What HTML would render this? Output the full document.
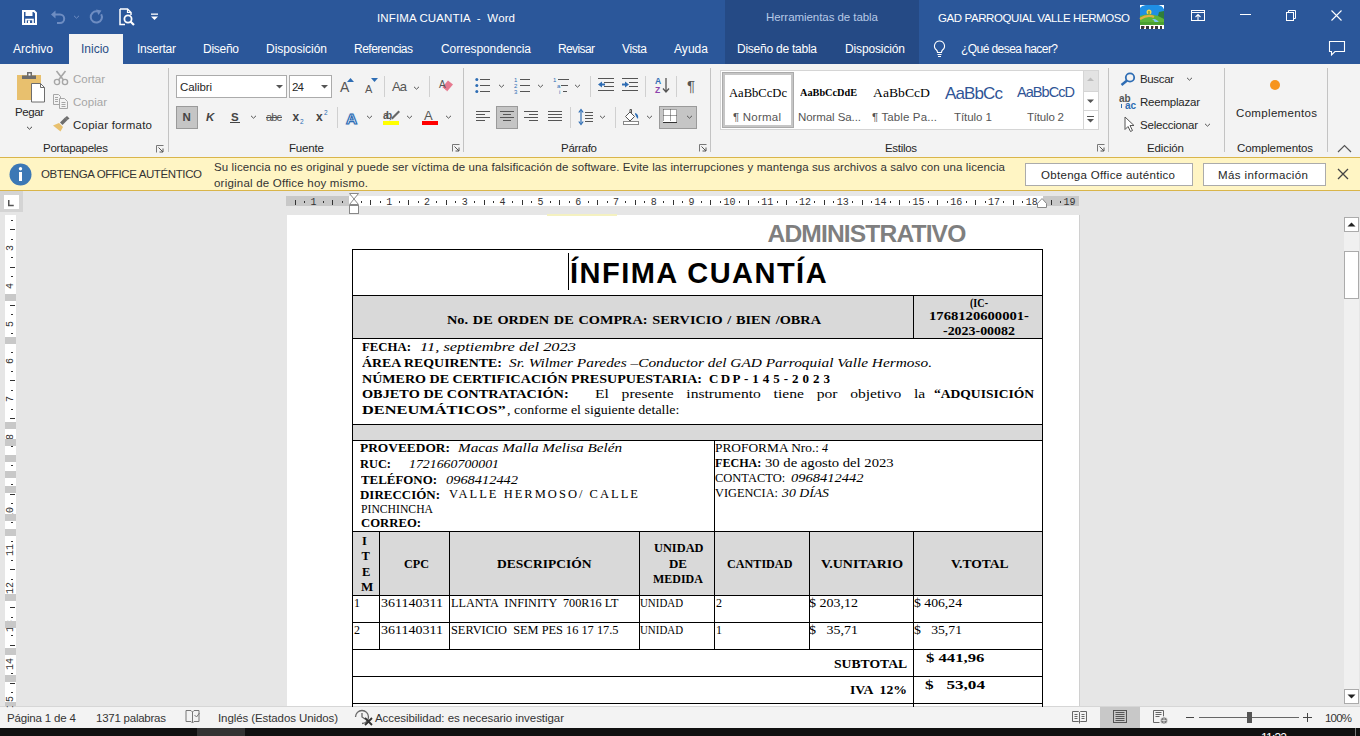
<!DOCTYPE html>
<html><head><meta charset="utf-8"><title>INFIMA CUANTIA - Word</title>
<style>
html,body{margin:0;padding:0;width:1360px;height:736px;overflow:hidden;background:#E6E6E6;}
.a{position:absolute;}
.t{white-space:pre;line-height:normal;}
svg.a{overflow:visible;}
</style></head><body>
<div class="a" style="left:0px;top:0px;width:1360px;height:64px;background:#2B579A;"></div><div class="a" style="left:725px;top:0px;width:194px;height:64px;background:#254A85;"></div><div class="a" style="left:69px;top:34px;width:54px;height:30px;background:#F3F3F3;"></div><div class="a" style="left:0px;top:64px;width:1360px;height:93px;background:#F3F3F3;"></div><div class="a" style="left:168px;top:68px;width:1px;height:84px;background:#C3C3C3;"></div><div class="a" style="left:463px;top:68px;width:1px;height:84px;background:#C3C3C3;"></div><div class="a" style="left:710px;top:68px;width:1px;height:84px;background:#C3C3C3;"></div><div class="a" style="left:1108px;top:68px;width:1px;height:84px;background:#C3C3C3;"></div><div class="a" style="left:1224px;top:68px;width:1px;height:84px;background:#C3C3C3;"></div><div class="a" style="left:1327px;top:68px;width:1px;height:84px;background:#C3C3C3;"></div><div class="a" style="left:176px;top:75px;width:111px;height:23px;background:#FFFFFF;box-sizing:border-box;border:1px solid #ABABAB;"></div><div class="a" style="left:289px;top:75px;width:43px;height:23px;background:#FFFFFF;box-sizing:border-box;border:1px solid #ABABAB;"></div><div class="a" style="left:720px;top:70px;width:379px;height:60px;background:#FFFFFF;box-sizing:border-box;border:1px solid #D5D5D5;"></div><div class="a" style="left:722px;top:72px;width:72px;height:56px;background:#FFFFFF;box-sizing:border-box;border:3px solid #C6C6C6;outline:1px solid #ABABAB;outline-offset:-1px;"></div><div class="a" style="left:1083px;top:70px;width:16px;height:60px;background:#FFFFFF;box-sizing:border-box;border:1px solid #D5D5D5;"></div><div class="a" style="left:1084px;top:71px;width:14px;height:21px;background:#E3E3E3;"></div><div class="a" style="left:1083px;top:91px;width:16px;height:1px;background:#D5D5D5;"></div><div class="a" style="left:1083px;top:110px;width:16px;height:1px;background:#D5D5D5;"></div><div class="a" style="left:0px;top:157px;width:1360px;height:34px;background:#FFF5C4;"></div><div class="a" style="left:0px;top:157px;width:1360px;height:1px;background:#D9B54A;"></div><div class="a" style="left:0px;top:190px;width:1360px;height:1px;background:#D9B54A;"></div><div class="a" style="left:1025px;top:163px;width:168px;height:23px;background:#FFFFFF;box-sizing:border-box;border:1px solid #ABABAB;"></div><div class="a" style="left:1203px;top:163px;width:123px;height:23px;background:#FFFFFF;box-sizing:border-box;border:1px solid #ABABAB;"></div><div class="a" style="left:0px;top:191px;width:1360px;height:515px;background:#E6E6E6;"></div><div class="a" style="left:287px;top:215px;width:792px;height:491px;background:#FFFFFF;"></div><div class="a" style="left:1079px;top:215px;width:1px;height:491px;background:#D0D0D0;"></div><div class="a" style="left:0px;top:706px;width:1360px;height:22px;background:#F3F3F3;"></div><div class="a" style="left:0px;top:706px;width:1360px;height:1px;background:#D6D6D6;"></div><div class="a" style="left:0px;top:728px;width:1360px;height:8px;background:#101010;"></div><div class="a" style="left:197px;top:728px;width:48px;height:8px;background:#333333;"></div><div class="a" style="left:1355px;top:728px;width:1px;height:8px;background:#7A7A7A;"></div><div class="a" style="left:1100px;top:707px;width:40px;height:21px;background:#C8C8C8;"></div><div class="a" style="left:286px;top:196px;width:793px;height:10px;background:#C8C8C8;"></div><div class="a" style="left:349px;top:196px;width:694px;height:10px;background:#FFFFFF;"></div><svg class="a" style="left:286px;top:196px;" width="793" height="10" viewBox="0 0 793 10"><rect x="9" y="4" width="1" height="5" fill="#333"/><rect x="18" y="5" width="1" height="2" fill="#333"/><rect x="37" y="5" width="1" height="2" fill="#333"/><rect x="46" y="4" width="1" height="5" fill="#333"/><rect x="56" y="5" width="1" height="2" fill="#333"/><rect x="75" y="5" width="1" height="2" fill="#333"/><rect x="84" y="4" width="1" height="5" fill="#333"/><rect x="94" y="5" width="1" height="2" fill="#333"/><rect x="113" y="5" width="1" height="2" fill="#333"/><rect x="122" y="4" width="1" height="5" fill="#333"/><rect x="132" y="5" width="1" height="2" fill="#333"/><rect x="150" y="5" width="1" height="2" fill="#333"/><rect x="160" y="4" width="1" height="5" fill="#333"/><rect x="169" y="5" width="1" height="2" fill="#333"/><rect x="188" y="5" width="1" height="2" fill="#333"/><rect x="198" y="4" width="1" height="5" fill="#333"/><rect x="207" y="5" width="1" height="2" fill="#333"/><rect x="226" y="5" width="1" height="2" fill="#333"/><rect x="236" y="4" width="1" height="5" fill="#333"/><rect x="245" y="5" width="1" height="2" fill="#333"/><rect x="264" y="5" width="1" height="2" fill="#333"/><rect x="273" y="4" width="1" height="5" fill="#333"/><rect x="283" y="5" width="1" height="2" fill="#333"/><rect x="302" y="5" width="1" height="2" fill="#333"/><rect x="311" y="4" width="1" height="5" fill="#333"/><rect x="321" y="5" width="1" height="2" fill="#333"/><rect x="339" y="5" width="1" height="2" fill="#333"/><rect x="349" y="4" width="1" height="5" fill="#333"/><rect x="358" y="5" width="1" height="2" fill="#333"/><rect x="377" y="5" width="1" height="2" fill="#333"/><rect x="387" y="4" width="1" height="5" fill="#333"/><rect x="396" y="5" width="1" height="2" fill="#333"/><rect x="415" y="5" width="1" height="2" fill="#333"/><rect x="424" y="4" width="1" height="5" fill="#333"/><rect x="434" y="5" width="1" height="2" fill="#333"/><rect x="453" y="5" width="1" height="2" fill="#333"/><rect x="462" y="4" width="1" height="5" fill="#333"/><rect x="472" y="5" width="1" height="2" fill="#333"/><rect x="491" y="5" width="1" height="2" fill="#333"/><rect x="500" y="4" width="1" height="5" fill="#333"/><rect x="510" y="5" width="1" height="2" fill="#333"/><rect x="528" y="5" width="1" height="2" fill="#333"/><rect x="538" y="4" width="1" height="5" fill="#333"/><rect x="547" y="5" width="1" height="2" fill="#333"/><rect x="566" y="5" width="1" height="2" fill="#333"/><rect x="576" y="4" width="1" height="5" fill="#333"/><rect x="585" y="5" width="1" height="2" fill="#333"/><rect x="604" y="5" width="1" height="2" fill="#333"/><rect x="613" y="4" width="1" height="5" fill="#333"/><rect x="623" y="5" width="1" height="2" fill="#333"/><rect x="642" y="5" width="1" height="2" fill="#333"/><rect x="651" y="4" width="1" height="5" fill="#333"/><rect x="661" y="5" width="1" height="2" fill="#333"/><rect x="680" y="5" width="1" height="2" fill="#333"/><rect x="689" y="4" width="1" height="5" fill="#333"/><rect x="699" y="5" width="1" height="2" fill="#333"/><rect x="717" y="5" width="1" height="2" fill="#333"/><rect x="727" y="4" width="1" height="5" fill="#333"/><rect x="736" y="5" width="1" height="2" fill="#333"/><rect x="755" y="5" width="1" height="2" fill="#333"/><rect x="765" y="4" width="1" height="5" fill="#333"/><rect x="774" y="5" width="1" height="2" fill="#333"/></svg><svg class="a" style="left:348px;top:192px;" width="12" height="24" viewBox="0 0 12 24"><path d="M1.5 1.5h9L6 7z" fill="#fff" stroke="#888"/><path d="M6 7L1.5 12.5h9z" fill="#fff" stroke="#888"/><rect x="1.5" y="13.5" width="9" height="8" fill="#fff" stroke="#888"/></svg><svg class="a" style="left:1036px;top:197px;" width="12" height="12" viewBox="0 0 12 12"><path d="M6 1.5L1.5 6.5v4h9v-4z" fill="#fff" stroke="#888"/></svg><div class="a" style="left:0px;top:191px;width:23px;height:21px;background:#D4D4D4;"></div><div class="a" style="left:4px;top:195px;width:15px;height:14px;background:#FFFFFF;"></div><svg class="a" style="left:4px;top:195px;" width="15" height="14" viewBox="0 0 15 14"><path d="M4.75 5v5.5h5" fill="none" stroke="#555" stroke-width="1.5"/></svg><div class="a" style="left:5px;top:215px;width:11px;height:491px;background:#FFFFFF;"></div><svg class="a" style="left:5px;top:215px;" width="11" height="491" viewBox="0 0 11 491"><rect x="6" y="5" width="2" height="1" fill="#333"/><rect x="5" y="14" width="5" height="1" fill="#333"/><rect x="6" y="24" width="2" height="1" fill="#333"/><rect x="6" y="42" width="2" height="1" fill="#333"/><rect x="5" y="52" width="5" height="1" fill="#333"/><rect x="6" y="61" width="2" height="1" fill="#333"/><rect x="6" y="80" width="2" height="1" fill="#333"/><rect x="5" y="90" width="5" height="1" fill="#333"/><rect x="6" y="99" width="2" height="1" fill="#333"/><rect x="6" y="118" width="2" height="1" fill="#333"/><rect x="5" y="128" width="5" height="1" fill="#333"/><rect x="6" y="137" width="2" height="1" fill="#333"/><rect x="6" y="156" width="2" height="1" fill="#333"/><rect x="5" y="165" width="5" height="1" fill="#333"/><rect x="6" y="175" width="2" height="1" fill="#333"/><rect x="6" y="194" width="2" height="1" fill="#333"/><rect x="5" y="203" width="5" height="1" fill="#333"/><rect x="6" y="213" width="2" height="1" fill="#333"/><rect x="6" y="231" width="2" height="1" fill="#333"/><rect x="5" y="241" width="5" height="1" fill="#333"/><rect x="6" y="250" width="2" height="1" fill="#333"/><rect x="6" y="269" width="2" height="1" fill="#333"/><rect x="5" y="279" width="5" height="1" fill="#333"/><rect x="6" y="288" width="2" height="1" fill="#333"/><rect x="6" y="307" width="2" height="1" fill="#333"/><rect x="5" y="316" width="5" height="1" fill="#333"/><rect x="6" y="326" width="2" height="1" fill="#333"/><rect x="6" y="345" width="2" height="1" fill="#333"/><rect x="5" y="354" width="5" height="1" fill="#333"/><rect x="6" y="364" width="2" height="1" fill="#333"/><rect x="6" y="383" width="2" height="1" fill="#333"/><rect x="5" y="392" width="5" height="1" fill="#333"/><rect x="6" y="402" width="2" height="1" fill="#333"/><rect x="6" y="420" width="2" height="1" fill="#333"/><rect x="5" y="430" width="5" height="1" fill="#333"/><rect x="6" y="439" width="2" height="1" fill="#333"/><rect x="6" y="458" width="2" height="1" fill="#333"/><rect x="5" y="468" width="5" height="1" fill="#333"/><rect x="6" y="477" width="2" height="1" fill="#333"/></svg><div class="a t" style="left:1px;top:242.0px;width:20px;height:12px;font-family:'Liberation Mono';font-size:10px;line-height:12px;text-align:center;color:#333;transform:rotate(-90deg);">3</div><div class="a t" style="left:1px;top:279.8px;width:20px;height:12px;font-family:'Liberation Mono';font-size:10px;line-height:12px;text-align:center;color:#333;transform:rotate(-90deg);">4</div><div class="a t" style="left:1px;top:317.6px;width:20px;height:12px;font-family:'Liberation Mono';font-size:10px;line-height:12px;text-align:center;color:#333;transform:rotate(-90deg);">5</div><div class="a t" style="left:1px;top:355.4px;width:20px;height:12px;font-family:'Liberation Mono';font-size:10px;line-height:12px;text-align:center;color:#333;transform:rotate(-90deg);">6</div><div class="a t" style="left:1px;top:393.2px;width:20px;height:12px;font-family:'Liberation Mono';font-size:10px;line-height:12px;text-align:center;color:#333;transform:rotate(-90deg);">7</div><div class="a t" style="left:1px;top:431.0px;width:20px;height:12px;font-family:'Liberation Mono';font-size:10px;line-height:12px;text-align:center;color:#333;transform:rotate(-90deg);">8</div><div class="a t" style="left:1px;top:468.8px;width:20px;height:12px;font-family:'Liberation Mono';font-size:10px;line-height:12px;text-align:center;color:#333;transform:rotate(-90deg);">9</div><div class="a t" style="left:1px;top:506.6px;width:20px;height:12px;font-family:'Liberation Mono';font-size:10px;line-height:12px;text-align:center;color:#333;transform:rotate(-90deg);">10</div><div class="a t" style="left:1px;top:544.4px;width:20px;height:12px;font-family:'Liberation Mono';font-size:10px;line-height:12px;text-align:center;color:#333;transform:rotate(-90deg);">11</div><div class="a t" style="left:1px;top:582.2px;width:20px;height:12px;font-family:'Liberation Mono';font-size:10px;line-height:12px;text-align:center;color:#333;transform:rotate(-90deg);">12</div><div class="a t" style="left:1px;top:620.0px;width:20px;height:12px;font-family:'Liberation Mono';font-size:10px;line-height:12px;text-align:center;color:#333;transform:rotate(-90deg);">13</div><div class="a t" style="left:1px;top:657.8px;width:20px;height:12px;font-family:'Liberation Mono';font-size:10px;line-height:12px;text-align:center;color:#333;transform:rotate(-90deg);">14</div><div class="a t" style="left:1px;top:695.6px;width:20px;height:12px;font-family:'Liberation Mono';font-size:10px;line-height:12px;text-align:center;color:#333;transform:rotate(-90deg);">15</div><div class="a" style="left:5px;top:294px;width:11px;height:7px;background:#C8C8C8;"></div><div class="a" style="left:5px;top:337px;width:11px;height:7px;background:#C8C8C8;"></div><div class="a" style="left:5px;top:422px;width:11px;height:7px;background:#C8C8C8;"></div><div class="a" style="left:5px;top:439px;width:11px;height:7px;background:#C8C8C8;"></div><div class="a" style="left:5px;top:455px;width:11px;height:7px;background:#C8C8C8;"></div><div class="a" style="left:5px;top:471px;width:11px;height:7px;background:#C8C8C8;"></div><div class="a" style="left:5px;top:486px;width:11px;height:7px;background:#C8C8C8;"></div><div class="a" style="left:5px;top:514px;width:11px;height:7px;background:#C8C8C8;"></div><div class="a" style="left:5px;top:529px;width:11px;height:7px;background:#C8C8C8;"></div><div class="a" style="left:5px;top:594px;width:11px;height:7px;background:#C8C8C8;"></div><div class="a" style="left:5px;top:621px;width:11px;height:7px;background:#C8C8C8;"></div><div class="a" style="left:5px;top:648px;width:11px;height:7px;background:#C8C8C8;"></div><div class="a" style="left:5px;top:675px;width:11px;height:7px;background:#C8C8C8;"></div><div class="a" style="left:5px;top:702px;width:11px;height:4px;background:#C8C8C8;"></div><div class="a" style="left:1344px;top:217px;width:15px;height:487px;background:#F0F0F0;"></div><div class="a" style="left:1344px;top:217px;width:15px;height:15px;background:#FFFFFF;box-sizing:border-box;border:1px solid #ABABAB;"></div><svg class="a" style="left:1344px;top:217px;" width="15" height="15" viewBox="0 0 15 15"><path d="M3.5 9.5h8L7.5 5.5z" fill="#222"/></svg><div class="a" style="left:1344px;top:251px;width:15px;height:48px;background:#FFFFFF;box-sizing:border-box;border:1px solid #ABABAB;"></div><div class="a" style="left:1344px;top:689px;width:15px;height:15px;background:#FFFFFF;box-sizing:border-box;border:1px solid #ABABAB;"></div><svg class="a" style="left:1344px;top:689px;" width="15" height="15" viewBox="0 0 15 15"><path d="M3.5 5.5h8L7.5 9.5z" fill="#222"/></svg><div class="a" style="left:547px;top:214px;width:70px;height:2px;background:#F4F1C0;"></div><div class="a" style="left:352px;top:295px;width:691px;height:43px;background:#D9D9D9;"></div><div class="a" style="left:352px;top:424px;width:691px;height:16px;background:#D9D9D9;"></div><div class="a" style="left:352px;top:531px;width:691px;height:64px;background:#D9D9D9;"></div><div class="a" style="left:352px;top:249px;width:691px;height:1px;background:#000000;"></div><div class="a" style="left:352px;top:295px;width:691px;height:1px;background:#000000;"></div><div class="a" style="left:352px;top:338px;width:691px;height:1px;background:#000000;"></div><div class="a" style="left:352px;top:424px;width:691px;height:1px;background:#000000;"></div><div class="a" style="left:352px;top:440px;width:691px;height:1px;background:#000000;"></div><div class="a" style="left:352px;top:531px;width:691px;height:1px;background:#000000;"></div><div class="a" style="left:352px;top:595px;width:691px;height:1px;background:#000000;"></div><div class="a" style="left:352px;top:622px;width:691px;height:1px;background:#000000;"></div><div class="a" style="left:352px;top:649px;width:691px;height:1px;background:#000000;"></div><div class="a" style="left:352px;top:676px;width:691px;height:1px;background:#000000;"></div><div class="a" style="left:352px;top:703px;width:691px;height:1px;background:#000000;"></div><div class="a" style="left:352px;top:249px;width:1px;height:458px;background:#000000;"></div><div class="a" style="left:1042px;top:249px;width:1px;height:458px;background:#000000;"></div><div class="a" style="left:913px;top:295px;width:1px;height:44px;background:#000000;"></div><div class="a" style="left:714px;top:440px;width:1px;height:210px;background:#000000;"></div><div class="a" style="left:379px;top:531px;width:1px;height:119px;background:#000000;"></div><div class="a" style="left:449px;top:531px;width:1px;height:119px;background:#000000;"></div><div class="a" style="left:639px;top:531px;width:1px;height:119px;background:#000000;"></div><div class="a" style="left:809px;top:531px;width:1px;height:119px;background:#000000;"></div><div class="a" style="left:913px;top:531px;width:1px;height:119px;background:#000000;"></div><div class="a" style="left:913px;top:649px;width:1px;height:58px;background:#000000;"></div><div class="a" style="left:568px;top:253px;width:1px;height:37px;background:#000000;"></div><svg class="a" style="left:22px;top:10px;" width="15" height="15" viewBox="0 0 15 15"><path d="M1 1h11l2 2v11H1z" fill="none" stroke="#FFFFFF" stroke-width="2"/><rect x="3.5" y="2" width="7" height="4" fill="#FFFFFF"/><rect x="4" y="9.5" width="7" height="4.5" fill="none" stroke="#FFFFFF" stroke-width="1.6"/><rect x="6" y="10.5" width="2" height="3" fill="#FFFFFF"/></svg><svg class="a" style="left:50px;top:9px;" width="16" height="16" viewBox="0 0 16 16"><path d="M3 5.5h7a4.2 4.2 0 0 1 0 8.4H7" fill="none" stroke="#6E8DC2" stroke-width="2"/><path d="M1 5.5L5.5 1.5v8z" fill="#6E8DC2"/></svg><svg class="a" style="left:73px;top:15px;" width="7" height="4" viewBox="0 0 7 4"><path d="M1 0.8L3.5 3.2L6 0.8" fill="none" stroke="#6E8DC2" stroke-width="1"/></svg><svg class="a" style="left:89px;top:9px;" width="16" height="16" viewBox="0 0 16 16"><path d="M12.2 5.2A5.6 5.6 0 1 1 8 2.4" fill="none" stroke="#6E8DC2" stroke-width="2"/><path d="M7 0.5L12.5 1.5L9.5 6z" fill="#6E8DC2"/></svg><svg class="a" style="left:119px;top:8px;" width="17" height="18" viewBox="0 0 17 18"><path d="M1 1h7.5l3.5 3.5V7M1 1v15.5h5" fill="none" stroke="#FFFFFF" stroke-width="1.5"/><path d="M8.5 1v3.5H12" fill="none" stroke="#FFFFFF" stroke-width="1.2"/><circle cx="9" cy="11" r="3.6" fill="none" stroke="#FFFFFF" stroke-width="1.8"/><path d="M11.5 13.5L15 17" stroke="#FFFFFF" stroke-width="2.2"/></svg><svg class="a" style="left:150px;top:13px;" width="9" height="8" viewBox="0 0 9 8"><rect x="1" y="0.5" width="7" height="1.3" fill="#FFFFFF"/><path d="M1 3.5h7L4.5 7z" fill="#FFFFFF"/></svg><svg class="a" style="left:1140px;top:5px;" width="24" height="24" viewBox="0 0 24 24"><rect width="24" height="24" fill="#FFFFFF"/><path d="M0 3Q2 0 6 0H18Q22 0 24 4V20H0z" fill="#1F8FE5"/><path d="M0 2V0h5Q1 1 0 2zM24 4V0h-5q4 1 5 4z" fill="#FFFFFF"/><circle cx="9" cy="7" r="2.5" fill="#F2D64B"/><path d="M9 6v5" stroke="#6B8E23" stroke-width="1.2"/><path d="M0 11Q8 8 14 10T24 8V20H0z" fill="#5DB33A"/><path d="M0 14Q8 9 14 12" stroke="#E0B040" stroke-width="2.2" fill="none"/><path d="M19 7l5 -1v8l-6 -3z" fill="#2F7D3A"/><path d="M12 14Q16 16 14 20h5Q20 16 15 14z" fill="#7CC4F0"/><path d="M0 17h24v3H0z" fill="#4AA030"/><rect x="0" y="20" width="24" height="4" fill="#FFFFFF"/><path d="M1 21h3v3H1zM6 21h3v3H6zM11 21h2v3h-2zM15 21h3v3h-3zM20 21h2v3h-2z" fill="#3A3A3A"/><path d="M4 22h1M13 22h1" stroke="#C0392B"/></svg><svg class="a" style="left:1191px;top:9px;" width="15" height="13" viewBox="0 0 15 13"><rect x="0.5" y="1.5" width="13" height="10" fill="none" stroke="#FFFFFF" stroke-width="1"/><path d="M0.5 3.5h13" stroke="#FFFFFF"/><path d="M7 11V5.5M4.5 8l2.5-2.5L9.5 8" fill="none" stroke="#FFFFFF" stroke-width="1.1"/></svg><div class="a" style="left:1240px;top:14px;width:11px;height:1px;background:#FFFFFF;"></div><svg class="a" style="left:1285px;top:9px;" width="12" height="12" viewBox="0 0 12 12"><rect x="1.5" y="3.5" width="7" height="8" fill="none" stroke="#FFFFFF"/><path d="M3.5 3.5V1.5h7v8H8.5" fill="none" stroke="#FFFFFF"/></svg><svg class="a" style="left:1331px;top:10px;" width="11" height="11" viewBox="0 0 11 11"><path d="M0.5 0.5L10.5 10.5M10.5 0.5L0.5 10.5" stroke="#FFFFFF" stroke-width="1.1"/></svg><svg class="a" style="left:933px;top:40px;" width="13" height="18" viewBox="0 0 13 18"><path d="M6.5 1a5 5 0 0 0-3 9c.8.7 1 1.5 1 2.5h4c0-1 .2-1.8 1-2.5a5 5 0 0 0-3-9z" fill="none" stroke="#FFFFFF" stroke-width="1.1"/><path d="M4.5 14.5h4M5 16.5h3" stroke="#FFFFFF" stroke-width="1.1"/></svg><svg class="a" style="left:1328px;top:40px;" width="18" height="17" viewBox="0 0 18 17"><path d="M1.5 1.5h15v10H7l-3.5 3.5v-3.5h-2z" fill="none" stroke="#FFFFFF" stroke-width="1.1"/></svg><svg class="a" style="left:16px;top:71px;" width="31" height="32" viewBox="0 0 31 32"><rect x="1" y="4" width="24" height="25" fill="#E8C06E"/><rect x="6" y="4.5" width="14" height="3.5" fill="#6D6D6D"/><rect x="11" y="1" width="5" height="5" fill="#6D6D6D"/><rect x="12.5" y="2.5" width="2" height="2" fill="#FFFFFF"/><path d="M15.5 12.5h9l4 4v14.5h-13z" fill="#FFFFFF" stroke="#6D6D6D"/><path d="M24.5 12.5v4h4" fill="none" stroke="#6D6D6D"/></svg><svg class="a" style="left:26px;top:126px;" width="7" height="4" viewBox="0 0 7 4"><path d="M1 0.8L3.5 3.2L6 0.8" fill="none" stroke="#444" stroke-width="1"/></svg><svg class="a" style="left:53px;top:70px;" width="16" height="16" viewBox="0 0 16 16"><path d="M3.5 1L10.5 10M12.5 1L5.5 10" stroke="#A6A6A6" stroke-width="1.6"/><circle cx="4" cy="12" r="2.6" fill="none" stroke="#A6A6A6" stroke-width="1.4"/><circle cx="12" cy="12" r="2.6" fill="none" stroke="#A6A6A6" stroke-width="1.4"/></svg><svg class="a" style="left:52px;top:93px;" width="17" height="16" viewBox="0 0 17 16"><path d="M1.5 1.5h5l2 2v8h-7z" fill="none" stroke="#A6A6A6"/><path d="M7.5 5.5h5l3 3v7h-8z" fill="#F3F3F3" stroke="#A6A6A6"/><path d="M3 4.5h3M3 6.5h3M3 8.5h3M9.5 9.5h4M9.5 11.5h4M9.5 13.5h4" stroke="#A6A6A6"/></svg><svg class="a" style="left:52px;top:116px;" width="18" height="16" viewBox="0 0 18 16"><path d="M1 9.5L7 7l4 4-2.5 4.5z" fill="#E8C06E"/><path d="M8 6.5l5-5 2.5 2.5-5 5z" fill="#6D6D6D"/><path d="M13 1.5l2-1.5 2.5 2.5L15.5 4" fill="#6D6D6D"/></svg><svg class="a" style="left:156px;top:145px;" width="9" height="9" viewBox="0 0 9 9"><path d="M0.5 0.5h7M0.5 0.5v7" stroke="#777" fill="none"/><path d="M2.5 2.5L7 7M7 3.5V7H3.5" stroke="#555" fill="none"/></svg><svg class="a" style="left:276px;top:85px;" width="7" height="4" viewBox="0 0 7 4"><path d="M0 0h7L3.5 3.5z" fill="#555"/></svg><svg class="a" style="left:321px;top:85px;" width="7" height="4" viewBox="0 0 7 4"><path d="M0 0h7L3.5 3.5z" fill="#555"/></svg><div class="a" style="left:176px;top:106px;width:22px;height:23px;background:#C5C5C5;box-sizing:border-box;border:1px solid #9A9A9A;"></div><div class="a" style="left:230px;top:122px;width:10px;height:1.3px;background:#444;"></div><svg class="a" style="left:250px;top:115px;" width="7" height="4" viewBox="0 0 7 4"><path d="M1 0.8L3.5 3.2L6 0.8" fill="none" stroke="#555" stroke-width="1"/></svg><div class="a" style="left:266px;top:117px;width:16px;height:1px;background:#555;"></div><div class="a" style="left:337px;top:107px;width:1px;height:21px;background:#D0D0D0;"></div><svg class="a" style="left:347px;top:78px;" width="7" height="4" viewBox="0 0 7 4"><path d="M0 4h7L3.5 0z" fill="#2E6DB4"/></svg><svg class="a" style="left:371px;top:78px;" width="7" height="4" viewBox="0 0 7 4"><path d="M0 0h7L3.5 4z" fill="#2E6DB4"/></svg><div class="a" style="left:384px;top:76px;width:1px;height:21px;background:#D0D0D0;"></div><svg class="a" style="left:413px;top:86px;" width="7" height="4" viewBox="0 0 7 4"><path d="M1 0.8L3.5 3.2L6 0.8" fill="none" stroke="#555" stroke-width="1"/></svg><div class="a" style="left:429px;top:76px;width:1px;height:21px;background:#D0D0D0;"></div><svg class="a" style="left:441px;top:80px;" width="13" height="12" viewBox="0 0 13 12"><path d="M7 0.5l5 4-6 7-5-4z" fill="#E6798F"/><path d="M1 7.5l5 4" stroke="#F3F3F3" stroke-width="1"/></svg><svg class="a" style="left:366px;top:115px;" width="7" height="4" viewBox="0 0 7 4"><path d="M1 0.8L3.5 3.2L6 0.8" fill="none" stroke="#555" stroke-width="1"/></svg><svg class="a" style="left:388px;top:108px;" width="12" height="12" viewBox="0 0 12 12"><path d="M3 10L10.5 2.5l1.5 1.5L4.5 11.5z" fill="#666"/><path d="M2.5 10.5l1 1-2 1z" fill="#666"/></svg><div class="a" style="left:383px;top:121px;width:16px;height:4px;background:#FFFF00;"></div><svg class="a" style="left:406px;top:115px;" width="7" height="4" viewBox="0 0 7 4"><path d="M1 0.8L3.5 3.2L6 0.8" fill="none" stroke="#555" stroke-width="1"/></svg><div class="a" style="left:422px;top:121px;width:16px;height:4px;background:#FF0000;"></div><svg class="a" style="left:445px;top:115px;" width="7" height="4" viewBox="0 0 7 4"><path d="M1 0.8L3.5 3.2L6 0.8" fill="none" stroke="#555" stroke-width="1"/></svg><svg class="a" style="left:452px;top:144px;" width="9" height="9" viewBox="0 0 9 9"><path d="M0.5 0.5h7M0.5 0.5v7" stroke="#777" fill="none"/><path d="M2.5 2.5L7 7M7 3.5V7H3.5" stroke="#555" fill="none"/></svg><svg class="a" style="left:475px;top:77px;" width="15" height="16" viewBox="0 0 15 16"><circle cx="1.8" cy="2.5" r="1.5" fill="#2E6DB4"/><circle cx="1.8" cy="8.5" r="1.5" fill="#2E6DB4"/><circle cx="1.8" cy="14.5" r="1.5" fill="#2E6DB4"/><path d="M5 2.5h10M5 8.5h10M5 14.5h10" stroke="#555" stroke-width="1"/></svg><svg class="a" style="left:498px;top:84px;" width="7" height="4" viewBox="0 0 7 4"><path d="M1 0.8L3.5 3.2L6 0.8" fill="none" stroke="#555" stroke-width="1"/></svg><svg class="a" style="left:514px;top:77px;" width="16" height="16" viewBox="0 0 16 16"><path d="M6 2.5h10M6 8.5h10M6 14.5h10" stroke="#555"/></svg><svg class="a" style="left:537px;top:84px;" width="7" height="4" viewBox="0 0 7 4"><path d="M1 0.8L3.5 3.2L6 0.8" fill="none" stroke="#555" stroke-width="1"/></svg><svg class="a" style="left:553px;top:77px;" width="17" height="16" viewBox="0 0 17 16"><path d="M5 2.5h11M8 8.5h7M10 14.5h4" stroke="#555"/></svg><svg class="a" style="left:574px;top:84px;" width="7" height="4" viewBox="0 0 7 4"><path d="M1 0.8L3.5 3.2L6 0.8" fill="none" stroke="#555" stroke-width="1"/></svg><div class="a" style="left:590px;top:76px;width:1px;height:21px;background:#D0D0D0;"></div><svg class="a" style="left:598px;top:77px;" width="17" height="16" viewBox="0 0 17 16"><path d="M0 1.5h16M6 5.5h10M6 9.5h10M0 13.5h16" stroke="#555"/><path d="M0 7.5l4-3v6z" fill="#2E6DB4"/><path d="M3 7.5h4" stroke="#2E6DB4" stroke-width="2"/></svg><svg class="a" style="left:622px;top:77px;" width="17" height="16" viewBox="0 0 17 16"><path d="M0 1.5h16M7 5.5h9M7 9.5h9M0 13.5h16" stroke="#555"/><path d="M7 7.5l-4-3v6z" fill="#2E6DB4"/><path d="M0 7.5h4" stroke="#2E6DB4" stroke-width="2"/></svg><div class="a" style="left:645px;top:76px;width:1px;height:21px;background:#D0D0D0;"></div><svg class="a" style="left:662px;top:77px;" width="8" height="17" viewBox="0 0 8 17"><path d="M4 1v14M1 11.5l3 3.5 3-3.5" fill="none" stroke="#555" stroke-width="1.3"/></svg><div class="a" style="left:676px;top:76px;width:1px;height:21px;background:#D0D0D0;"></div><svg class="a" style="left:476px;top:111px;" width="14" height="12" viewBox="0 0 14 12"><path d="M0 .5h14M0 3.5h9M0 6.5h14M0 9.5h9" stroke="#555"/></svg><div class="a" style="left:496px;top:106px;width:22px;height:23px;background:#C5C5C5;box-sizing:border-box;border:1px solid #9A9A9A;"></div><svg class="a" style="left:500px;top:111px;" width="14" height="12" viewBox="0 0 14 12"><path d="M0 .5h14M3 3.5h8M0 6.5h14M3 9.5h8" stroke="#555"/></svg><svg class="a" style="left:524px;top:111px;" width="14" height="12" viewBox="0 0 14 12"><path d="M0 .5h14M5 3.5h9M0 6.5h14M5 9.5h9" stroke="#555"/></svg><svg class="a" style="left:548px;top:111px;" width="14" height="12" viewBox="0 0 14 12"><path d="M0 .5h14M0 3.5h14M0 6.5h14M0 9.5h14" stroke="#555"/></svg><div class="a" style="left:570px;top:107px;width:1px;height:21px;background:#D0D0D0;"></div><svg class="a" style="left:578px;top:108px;" width="16" height="18" viewBox="0 0 16 18"><path d="M3 2.5v13" stroke="#2E6DB4" stroke-width="1.2"/><path d="M0.8 4.5L3 1.5L5.2 4.5M0.8 13.5L3 16.5L5.2 13.5" fill="none" stroke="#2E6DB4" stroke-width="1.2"/><path d="M7 4.5h8M7 7.5h8M7 10.5h8M7 13.5h8" stroke="#555"/></svg><svg class="a" style="left:599px;top:115px;" width="7" height="4" viewBox="0 0 7 4"><path d="M1 0.8L3.5 3.2L6 0.8" fill="none" stroke="#555" stroke-width="1"/></svg><div class="a" style="left:615px;top:107px;width:1px;height:21px;background:#D0D0D0;"></div><svg class="a" style="left:622px;top:107px;" width="19" height="19" viewBox="0 0 19 19"><path d="M3.5 9.5l4.5-4.5 4.5 4.5-4.5 4.5z" fill="#FFFFFF" stroke="#555" stroke-width="1"/><path d="M8 5V2.5h1.5V6" fill="none" stroke="#555" stroke-width="1"/><path d="M13 6q4 1 3 6q-2-2-3-5z" fill="#2E6DB4"/><rect x="1.5" y="14.5" width="15" height="3" fill="#FFFFFF" stroke="#888" stroke-width="1"/></svg><svg class="a" style="left:646px;top:115px;" width="7" height="4" viewBox="0 0 7 4"><path d="M1 0.8L3.5 3.2L6 0.8" fill="none" stroke="#555" stroke-width="1"/></svg><div class="a" style="left:659px;top:106px;width:38px;height:23px;background:#C5C5C5;box-sizing:border-box;border:1px solid #9A9A9A;"></div><svg class="a" style="left:663px;top:109px;" width="15" height="15" viewBox="0 0 15 15"><rect x="0" y="0" width="14" height="13" fill="#FFFFFF"/><path d="M.5 .5h13v12M.5 .5v12M7.5 .5v12M.5 6.5h13" fill="none" stroke="#444" stroke-dasharray="1 1"/><path d="M0 13.5h14" stroke="#333"/></svg><svg class="a" style="left:686px;top:115px;" width="7" height="4" viewBox="0 0 7 4"><path d="M1 0.8L3.5 3.2L6 0.8" fill="none" stroke="#555" stroke-width="1"/></svg><svg class="a" style="left:699px;top:144px;" width="9" height="9" viewBox="0 0 9 9"><path d="M0.5 0.5h7M0.5 0.5v7" stroke="#777" fill="none"/><path d="M2.5 2.5L7 7M7 3.5V7H3.5" stroke="#555" fill="none"/></svg><svg class="a" style="left:1097px;top:144px;" width="9" height="9" viewBox="0 0 9 9"><path d="M0.5 0.5h7M0.5 0.5v7" stroke="#777" fill="none"/><path d="M2.5 2.5L7 7M7 3.5V7H3.5" stroke="#555" fill="none"/></svg><svg class="a" style="left:1087px;top:77px;" width="8" height="5" viewBox="0 0 8 5"><path d="M0 4h7L3.5 0.5z" fill="#BDBDBD"/></svg><svg class="a" style="left:1087px;top:99px;" width="8" height="5" viewBox="0 0 8 5"><path d="M0 0.5h7L3.5 4z" fill="#555"/></svg><svg class="a" style="left:1087px;top:116px;" width="8" height="8" viewBox="0 0 8 8"><rect x="0" y="0" width="7" height="1" fill="#555"/><path d="M0 3h7L3.5 6.5z" fill="#555"/></svg><svg class="a" style="left:1120px;top:72px;" width="16" height="14" viewBox="0 0 16 14"><circle cx="10" cy="5.5" r="4.2" fill="none" stroke="#2E6DB4" stroke-width="1.8"/><path d="M7 8.5L1.5 13" stroke="#2E6DB4" stroke-width="2.4"/></svg><svg class="a" style="left:1186px;top:77px;" width="7" height="4" viewBox="0 0 7 4"><path d="M1 0.8L3.5 3.2L6 0.8" fill="none" stroke="#555" stroke-width="1"/></svg><div class="a" style="left:1121px;top:104px;width:1px;height:4px;background:#2E6DB4;"></div><svg class="a" style="left:1124px;top:116px;" width="11" height="16" viewBox="0 0 11 16"><path d="M1 1v12.5l3-3 2.5 5 2-1-2.5-5h4z" fill="#FFFFFF" stroke="#555" stroke-width="1"/></svg><svg class="a" style="left:1204px;top:123px;" width="7" height="4" viewBox="0 0 7 4"><path d="M1 0.8L3.5 3.2L6 0.8" fill="none" stroke="#555" stroke-width="1"/></svg><svg class="a" style="left:1269px;top:79px;" width="12" height="12" viewBox="0 0 12 12"><circle cx="6" cy="6" r="5" fill="#F7941D"/></svg><svg class="a" style="left:1337px;top:144px;" width="15" height="9" viewBox="0 0 15 9"><path d="M1 8L7.5 1.5L14 8" fill="none" stroke="#555" stroke-width="1.2"/></svg><svg class="a" style="left:9px;top:163px;" width="23" height="23" viewBox="0 0 23 23"><circle cx="11.5" cy="11.5" r="11" fill="#3C78B5"/><rect x="10" y="9" width="3" height="9" fill="#FFFFFF"/><circle cx="11.5" cy="5.8" r="1.7" fill="#FFFFFF"/></svg><svg class="a" style="left:1337px;top:168px;" width="12" height="12" viewBox="0 0 12 12"><path d="M1 1L11 11M11 1L1 11" stroke="#444" stroke-width="1.3"/></svg><svg class="a" style="left:185px;top:709px;" width="16" height="16" viewBox="0 0 16 16"><path d="M1 1.5h5l1.5 1.5 1.5-1.5h5v11H9l-1.5 1.5L6 12.5H1z" fill="none" stroke="#777"/><path d="M7.5 3v10.5" stroke="#777"/><path d="M9.5 6l2 2 3-4" fill="none" stroke="#777"/></svg><svg class="a" style="left:354px;top:709px;" width="20" height="16" viewBox="0 0 20 16"><path d="M1.5 8a6.5 6.5 0 1 1 6.5 6.5" fill="none" stroke="#666" stroke-width="1.3"/><path d="M8 4v4l3 2" fill="none" stroke="#666" stroke-width="1.3"/><path d="M11 9l7 7M18 9l-7 7" stroke="#333" stroke-width="1.8"/></svg><svg class="a" style="left:1072px;top:710px;" width="15" height="14" viewBox="0 0 15 14"><path d="M.5 1.5h6l1 1 1-1h6v10h-6l-1 1-1-1h-6z" fill="none" stroke="#666"/><path d="M7.5 2.5v11M2.5 4.5h3M2.5 6.5h3M2.5 8.5h3M9.5 4.5h3M9.5 6.5h3M9.5 8.5h3" stroke="#666"/></svg><svg class="a" style="left:1112px;top:709px;" width="16" height="15" viewBox="0 0 16 15"><rect x="1.5" y="1.5" width="13" height="12" fill="none" stroke="#555"/><path d="M3.5 3.5h9M3.5 5.5h9M3.5 7.5h9M3.5 9.5h9M3.5 11.5h9" stroke="#555"/></svg><svg class="a" style="left:1152px;top:709px;" width="17" height="16" viewBox="0 0 17 16"><path d="M1.5 1.5h10v6M1.5 1.5v12h6" fill="none" stroke="#666"/><path d="M3.5 3.5h6M3.5 5.5h6M3.5 7.5h4" stroke="#666"/><circle cx="12" cy="11.5" r="3.6" fill="#777" stroke="#F3F3F3" stroke-width=".8"/><path d="M9.5 11.5h5M12 9v5" stroke="#F3F3F3" stroke-width=".7"/></svg><div class="a" style="left:1186px;top:717px;width:8px;height:1px;background:#444;"></div><div class="a" style="left:1199px;top:717px;width:100px;height:1px;background:#666;"></div><div class="a" style="left:1247px;top:712px;width:5px;height:11px;background:#555;"></div><svg class="a" style="left:1303px;top:713px;" width="9" height="9" viewBox="0 0 9 9"><path d="M4.5 0v9M0 4.5h9" stroke="#444"/></svg>
<div class="a t" style="left:377px;top:11.59px;font-family:'Liberation Sans', sans-serif;font-size:11.5px;font-weight:400;font-style:normal;color:#FFFFFF;letter-spacing:0.125px;">INFIMA CUANTIA  -  Word</div><div class="a t" style="left:766px;top:10.59px;font-family:'Liberation Sans', sans-serif;font-size:11.5px;font-weight:400;font-style:normal;color:#B7C9E6;letter-spacing:-0.058px;">Herramientas de tabla</div><div class="a t" style="left:938px;top:11.59px;font-family:'Liberation Sans', sans-serif;font-size:11.5px;font-weight:400;font-style:normal;color:#FFFFFF;letter-spacing:-0.408px;">GAD PARROQUIAL VALLE HERMOSO</div><div class="a t" style="left:13px;top:42.14px;font-family:'Liberation Sans', sans-serif;font-size:12px;font-weight:400;font-style:normal;color:#FFFFFF;letter-spacing:-0.003px;">Archivo</div><div class="a t" style="left:137px;top:42.14px;font-family:'Liberation Sans', sans-serif;font-size:12px;font-weight:400;font-style:normal;color:#FFFFFF;letter-spacing:-0.241px;">Insertar</div><div class="a t" style="left:203px;top:42.14px;font-family:'Liberation Sans', sans-serif;font-size:12px;font-weight:400;font-style:normal;color:#FFFFFF;letter-spacing:-0.272px;">Diseño</div><div class="a t" style="left:266px;top:42.14px;font-family:'Liberation Sans', sans-serif;font-size:12px;font-weight:400;font-style:normal;color:#FFFFFF;letter-spacing:-0.036px;">Disposición</div><div class="a t" style="left:354px;top:42.14px;font-family:'Liberation Sans', sans-serif;font-size:12px;font-weight:400;font-style:normal;color:#FFFFFF;letter-spacing:-0.503px;">Referencias</div><div class="a t" style="left:441px;top:42.14px;font-family:'Liberation Sans', sans-serif;font-size:12px;font-weight:400;font-style:normal;color:#FFFFFF;letter-spacing:-0.099px;">Correspondencia</div><div class="a t" style="left:558px;top:42.14px;font-family:'Liberation Sans', sans-serif;font-size:12px;font-weight:400;font-style:normal;color:#FFFFFF;letter-spacing:-0.615px;">Revisar</div><div class="a t" style="left:622px;top:42.14px;font-family:'Liberation Sans', sans-serif;font-size:12px;font-weight:400;font-style:normal;color:#FFFFFF;letter-spacing:-0.367px;">Vista</div><div class="a t" style="left:674px;top:42.14px;font-family:'Liberation Sans', sans-serif;font-size:12px;font-weight:400;font-style:normal;color:#FFFFFF;letter-spacing:0.047px;">Ayuda</div><div class="a t" style="left:737px;top:42.14px;font-family:'Liberation Sans', sans-serif;font-size:12px;font-weight:400;font-style:normal;color:#FFFFFF;letter-spacing:-0.242px;">Diseño de tabla</div><div class="a t" style="left:845px;top:42.14px;font-family:'Liberation Sans', sans-serif;font-size:12px;font-weight:400;font-style:normal;color:#FFFFFF;letter-spacing:-0.136px;">Disposición</div><div class="a t" style="left:81px;top:42.14px;font-family:'Liberation Sans', sans-serif;font-size:12px;font-weight:400;font-style:normal;color:#2B4E86;letter-spacing:-0.003px;">Inicio</div><div class="a t" style="left:961px;top:42.14px;font-family:'Liberation Sans', sans-serif;font-size:12px;font-weight:400;font-style:normal;color:#FFFFFF;letter-spacing:-0.567px;">¿Qué desea hacer?</div><div class="a t" style="left:43px;top:141.59px;font-family:'Liberation Sans', sans-serif;font-size:11.5px;font-weight:400;font-style:normal;color:#262626;letter-spacing:-0.253px;">Portapapeles</div><div class="a t" style="left:289px;top:141.59px;font-family:'Liberation Sans', sans-serif;font-size:11.5px;font-weight:400;font-style:normal;color:#262626;letter-spacing:-0.163px;">Fuente</div><div class="a t" style="left:561px;top:141.59px;font-family:'Liberation Sans', sans-serif;font-size:11.5px;font-weight:400;font-style:normal;color:#262626;letter-spacing:-0.286px;">Párrafo</div><div class="a t" style="left:885px;top:141.59px;font-family:'Liberation Sans', sans-serif;font-size:11.5px;font-weight:400;font-style:normal;color:#262626;letter-spacing:-0.312px;">Estilos</div><div class="a t" style="left:1147px;top:141.59px;font-family:'Liberation Sans', sans-serif;font-size:11.5px;font-weight:400;font-style:normal;color:#262626;letter-spacing:-0.120px;">Edición</div><div class="a t" style="left:1237px;top:141.59px;font-family:'Liberation Sans', sans-serif;font-size:11.5px;font-weight:400;font-style:normal;color:#262626;letter-spacing:-0.122px;">Complementos</div><div class="a t" style="left:15px;top:106.09px;font-family:'Liberation Sans', sans-serif;font-size:11.5px;font-weight:400;font-style:normal;color:#262626;letter-spacing:-0.422px;">Pegar</div><div class="a t" style="left:73px;top:72.59px;font-family:'Liberation Sans', sans-serif;font-size:11.5px;font-weight:400;font-style:normal;color:#A6A6A6;letter-spacing:0.009px;">Cortar</div><div class="a t" style="left:73px;top:95.59px;font-family:'Liberation Sans', sans-serif;font-size:11.5px;font-weight:400;font-style:normal;color:#A6A6A6;letter-spacing:0.022px;">Copiar</div><div class="a t" style="left:73px;top:118.59px;font-family:'Liberation Sans', sans-serif;font-size:11.5px;font-weight:400;font-style:normal;color:#262626;letter-spacing:0.226px;">Copiar formato</div><div class="a t" style="left:1140px;top:72.59px;font-family:'Liberation Sans', sans-serif;font-size:11.5px;font-weight:400;font-style:normal;color:#262626;letter-spacing:-0.359px;">Buscar</div><div class="a t" style="left:1140px;top:95.59px;font-family:'Liberation Sans', sans-serif;font-size:11.5px;font-weight:400;font-style:normal;color:#262626;letter-spacing:-0.222px;">Reemplazar</div><div class="a t" style="left:1140px;top:118.59px;font-family:'Liberation Sans', sans-serif;font-size:11.5px;font-weight:400;font-style:normal;color:#262626;letter-spacing:-0.209px;">Seleccionar</div><div class="a t" style="left:1236px;top:106.59px;font-family:'Liberation Sans', sans-serif;font-size:11.5px;font-weight:400;font-style:normal;color:#262626;letter-spacing:0.332px;">Complementos</div><div class="a t" style="left:180px;top:80.59px;font-family:'Liberation Sans', sans-serif;font-size:11.5px;font-weight:400;font-style:normal;color:#262626;letter-spacing:-0.099px;">Calibri</div><div class="a t" style="left:292px;top:80.59px;font-family:'Liberation Sans', sans-serif;font-size:11.5px;font-weight:400;font-style:normal;color:#262626;letter-spacing:-0.797px;">24</div><div class="a t" style="left:729px;top:86.31px;font-family:'Liberation Serif', serif;font-size:12px;font-weight:400;font-style:normal;color:#000000;transform:scaleX(1.0483);transform-origin:0 0;">AaBbCcDc</div><div class="a t" style="left:733px;top:110.59px;font-family:'Liberation Sans', sans-serif;font-size:11.5px;font-weight:400;font-style:normal;color:#555555;letter-spacing:0.223px;">¶ Normal</div><div class="a t" style="left:800px;top:86.20px;font-family:'Liberation Serif', serif;font-size:11px;font-weight:700;font-style:normal;color:#000000;transform:scaleX(0.9325);transform-origin:0 0;">AaBbCcDdE</div><div class="a t" style="left:798px;top:110.59px;font-family:'Liberation Sans', sans-serif;font-size:11.5px;font-weight:400;font-style:normal;color:#555555;letter-spacing:-0.084px;">Normal Sa...</div><div class="a t" style="left:873px;top:85.42px;font-family:'Liberation Serif', serif;font-size:13px;font-weight:400;font-style:normal;color:#000000;transform:scaleX(1.0522);transform-origin:0 0;">AaBbCcD</div><div class="a t" style="left:872px;top:110.59px;font-family:'Liberation Sans', sans-serif;font-size:11.5px;font-weight:400;font-style:normal;color:#555555;letter-spacing:0.124px;">¶ Table Pa...</div><div class="a t" style="left:945px;top:83.61px;font-family:'Liberation Sans', sans-serif;font-size:17px;font-weight:400;font-style:normal;color:#2F5496;letter-spacing:-0.875px;">AaBbCc</div><div class="a t" style="left:954px;top:110.59px;font-family:'Liberation Sans', sans-serif;font-size:11.5px;font-weight:400;font-style:normal;color:#555555;letter-spacing:-0.051px;">Título 1</div><div class="a t" style="left:1017px;top:83.88px;font-family:'Liberation Sans', sans-serif;font-size:14.5px;font-weight:400;font-style:normal;color:#2F5496;letter-spacing:-0.945px;">AaBbCcD</div><div class="a t" style="left:1027px;top:110.59px;font-family:'Liberation Sans', sans-serif;font-size:11.5px;font-weight:400;font-style:normal;color:#555555;letter-spacing:-0.194px;">Título 2</div><div class="a t" style="left:41px;top:167.59px;font-family:'Liberation Sans', sans-serif;font-size:11.5px;font-weight:400;font-style:normal;color:#333333;letter-spacing:-0.390px;">OBTENGA OFFICE AUTÉNTICO</div><div class="a t" style="left:214px;top:160.59px;font-family:'Liberation Sans', sans-serif;font-size:11.5px;font-weight:400;font-style:normal;color:#333333;letter-spacing:0.106px;">Su licencia no es original y puede ser víctima de una falsificación de software. Evite las interrupciones y mantenga sus archivos a salvo con una licencia</div><div class="a t" style="left:214px;top:176.59px;font-family:'Liberation Sans', sans-serif;font-size:11.5px;font-weight:400;font-style:normal;color:#333333;letter-spacing:0.211px;">original de Office hoy mismo.</div><div class="a t" style="left:1041px;top:168.59px;font-family:'Liberation Sans', sans-serif;font-size:11.5px;font-weight:400;font-style:normal;color:#262626;letter-spacing:0.304px;">Obtenga Office auténtico</div><div class="a t" style="left:1218px;top:168.59px;font-family:'Liberation Sans', sans-serif;font-size:11.5px;font-weight:400;font-style:normal;color:#262626;letter-spacing:0.402px;">Más información</div><div class="a t" style="left:7px;top:711.59px;font-family:'Liberation Sans', sans-serif;font-size:11.5px;font-weight:400;font-style:normal;color:#333333;letter-spacing:-0.165px;">Página 1 de 4</div><div class="a t" style="left:96px;top:711.59px;font-family:'Liberation Sans', sans-serif;font-size:11.5px;font-weight:400;font-style:normal;color:#333333;letter-spacing:-0.242px;">1371 palabras</div><div class="a t" style="left:218px;top:711.59px;font-family:'Liberation Sans', sans-serif;font-size:11.5px;font-weight:400;font-style:normal;color:#333333;letter-spacing:-0.095px;">Inglés (Estados Unidos)</div><div class="a t" style="left:375px;top:711.59px;font-family:'Liberation Sans', sans-serif;font-size:11.5px;font-weight:400;font-style:normal;color:#333333;letter-spacing:-0.058px;">Accesibilidad: es necesario investigar</div><div class="a t" style="left:1325px;top:711.59px;font-family:'Liberation Sans', sans-serif;font-size:11.5px;font-weight:400;font-style:normal;color:#333333;letter-spacing:-0.807px;">100%</div><div class="a t" style="left:310.59999999999997px;top:196.67px;font-family:'Liberation Mono', monospace;font-size:10px;font-weight:400;font-style:normal;color:#333;">1</div><div class="a t" style="left:386.2px;top:196.67px;font-family:'Liberation Mono', monospace;font-size:10px;font-weight:400;font-style:normal;color:#333;">1</div><div class="a t" style="left:424.0px;top:196.67px;font-family:'Liberation Mono', monospace;font-size:10px;font-weight:400;font-style:normal;color:#333;">2</div><div class="a t" style="left:461.79999999999995px;top:196.67px;font-family:'Liberation Mono', monospace;font-size:10px;font-weight:400;font-style:normal;color:#333;">3</div><div class="a t" style="left:499.59999999999997px;top:196.67px;font-family:'Liberation Mono', monospace;font-size:10px;font-weight:400;font-style:normal;color:#333;">4</div><div class="a t" style="left:537.4px;top:196.67px;font-family:'Liberation Mono', monospace;font-size:10px;font-weight:400;font-style:normal;color:#333;">5</div><div class="a t" style="left:575.1999999999999px;top:196.67px;font-family:'Liberation Mono', monospace;font-size:10px;font-weight:400;font-style:normal;color:#333;">6</div><div class="a t" style="left:613.0px;top:196.67px;font-family:'Liberation Mono', monospace;font-size:10px;font-weight:400;font-style:normal;color:#333;">7</div><div class="a t" style="left:650.8px;top:196.67px;font-family:'Liberation Mono', monospace;font-size:10px;font-weight:400;font-style:normal;color:#333;">8</div><div class="a t" style="left:688.5999999999999px;top:196.67px;font-family:'Liberation Mono', monospace;font-size:10px;font-weight:400;font-style:normal;color:#333;">9</div><div class="a t" style="left:723.4px;top:196.67px;font-family:'Liberation Mono', monospace;font-size:10px;font-weight:400;font-style:normal;color:#333;">10</div><div class="a t" style="left:761.1999999999999px;top:196.67px;font-family:'Liberation Mono', monospace;font-size:10px;font-weight:400;font-style:normal;color:#333;">11</div><div class="a t" style="left:799.0px;top:196.67px;font-family:'Liberation Mono', monospace;font-size:10px;font-weight:400;font-style:normal;color:#333;">12</div><div class="a t" style="left:836.8px;top:196.67px;font-family:'Liberation Mono', monospace;font-size:10px;font-weight:400;font-style:normal;color:#333;">13</div><div class="a t" style="left:874.5999999999999px;top:196.67px;font-family:'Liberation Mono', monospace;font-size:10px;font-weight:400;font-style:normal;color:#333;">14</div><div class="a t" style="left:912.4px;top:196.67px;font-family:'Liberation Mono', monospace;font-size:10px;font-weight:400;font-style:normal;color:#333;">15</div><div class="a t" style="left:950.1999999999999px;top:196.67px;font-family:'Liberation Mono', monospace;font-size:10px;font-weight:400;font-style:normal;color:#333;">16</div><div class="a t" style="left:987.9999999999999px;top:196.67px;font-family:'Liberation Mono', monospace;font-size:10px;font-weight:400;font-style:normal;color:#333;">17</div><div class="a t" style="left:1025.8px;top:196.67px;font-family:'Liberation Mono', monospace;font-size:10px;font-weight:400;font-style:normal;color:#333;">18</div><div class="a t" style="left:1063.6px;top:196.67px;font-family:'Liberation Mono', monospace;font-size:10px;font-weight:400;font-style:normal;color:#333;">19</div><div class="a t" style="left:767.5px;top:219.74px;font-family:'Liberation Sans', sans-serif;font-size:24.6px;font-weight:700;font-style:normal;color:#7F7F7F;letter-spacing:-0.858px;">ADMINISTRATIVO</div><div class="a t" style="left:570px;top:256.75px;font-family:'Liberation Sans', sans-serif;font-size:29px;font-weight:700;font-style:normal;color:#000000;letter-spacing:1.481px;">ÍNFIMA CUANTÍA</div><div class="a t" style="left:447px;top:312.42px;font-family:'Liberation Serif', serif;font-size:13px;font-weight:700;font-style:normal;color:#000000;word-spacing:1.070px;transform:scaleX(1.1000);transform-origin:0 0;">No. DE ORDEN DE COMPRA: SERVICIO / BIEN /OBRA</div><div class="a t" style="left:970px;top:295.86px;font-family:'Liberation Serif', serif;font-size:12.5px;font-weight:700;font-style:normal;color:#000000;transform:scaleX(0.8101);transform-origin:0 0;">(IC-</div><div class="a t" style="left:929px;top:309.36px;font-family:'Liberation Serif', serif;font-size:12.5px;font-weight:700;font-style:normal;color:#000000;transform:scaleX(1.1707);transform-origin:0 0;">1768120600001-</div><div class="a t" style="left:943px;top:323.86px;font-family:'Liberation Serif', serif;font-size:12.5px;font-weight:700;font-style:normal;color:#000000;transform:scaleX(1.1149);transform-origin:0 0;">-2023-00082</div><div class="a t" style="left:362px;top:339.42px;font-family:'Liberation Serif', serif;font-size:13px;font-weight:700;font-style:normal;color:#000000;transform:scaleX(0.9831);transform-origin:0 0;">FECHA:</div><div class="a t" style="left:420px;top:339.42px;font-family:'Liberation Serif', serif;font-size:13px;font-weight:400;font-style:italic;color:#000000;transform:scaleX(1.2633);transform-origin:0 0;">11, septiembre del 2023</div><div class="a t" style="left:362px;top:355.42px;font-family:'Liberation Serif', serif;font-size:13px;font-weight:700;font-style:normal;color:#000000;transform:scaleX(1.0678);transform-origin:0 0;">ÁREA REQUIRENTE:</div><div class="a t" style="left:509px;top:355.42px;font-family:'Liberation Serif', serif;font-size:13px;font-weight:400;font-style:italic;color:#000000;transform:scaleX(1.1817);transform-origin:0 0;">Sr. Wilmer Paredes –Conductor del GAD Parroquial Valle Hermoso.</div><div class="a t" style="left:362px;top:370.92px;font-family:'Liberation Serif', serif;font-size:13px;font-weight:700;font-style:normal;color:#000000;transform:scaleX(1.0808);transform-origin:0 0;">NÚMERO DE CERTIFICACIÓN PRESUPUESTARIA:</div><div class="a t" style="left:709px;top:370.92px;font-family:'Liberation Serif', serif;font-size:13px;font-weight:700;font-style:normal;color:#000000;letter-spacing:2.341px;">CDP</div><div class="a t" style="left:744px;top:370.92px;font-family:'Liberation Serif', serif;font-size:13px;font-weight:700;font-style:normal;color:#000000;letter-spacing:3.979px;">-145-2023</div><div class="a t" style="left:362px;top:386.42px;font-family:'Liberation Serif', serif;font-size:13px;font-weight:700;font-style:normal;color:#000000;word-spacing:0.048px;transform:scaleX(1.1000);transform-origin:0 0;">OBJETO DE CONTRATACIÓN:</div><div class="a t" style="left:594.5px;top:386.42px;font-family:'Liberation Serif', serif;font-size:13px;font-weight:400;font-style:normal;color:#000000;word-spacing:7.365px;transform:scaleX(1.2000);transform-origin:0 0;">El presente instrumento tiene por objetivo la</div><div class="a t" style="left:933.6px;top:386.42px;font-family:'Liberation Serif', serif;font-size:13px;font-weight:700;font-style:normal;color:#000000;transform:scaleX(1.0419);transform-origin:0 0;">“ADQUISICIÓN</div><div class="a t" style="left:362px;top:402.12px;font-family:'Liberation Serif', serif;font-size:13px;font-weight:700;font-style:normal;color:#000000;transform:scaleX(1.2591);transform-origin:0 0;">DENEUMÁTICOS”</div><div class="a t" style="left:507px;top:402.12px;font-family:'Liberation Serif', serif;font-size:13px;font-weight:400;font-style:normal;color:#000000;transform:scaleX(1.0732);transform-origin:0 0;">, conforme el siguiente detalle:</div><div class="a t" style="left:360px;top:440.42px;font-family:'Liberation Serif', serif;font-size:13px;font-weight:700;font-style:normal;color:#000000;transform:scaleX(1.0299);transform-origin:0 0;">PROVEEDOR:</div><div class="a t" style="left:458px;top:440.42px;font-family:'Liberation Serif', serif;font-size:13px;font-weight:400;font-style:italic;color:#000000;transform:scaleX(1.1678);transform-origin:0 0;">Macas Malla Melisa Belén</div><div class="a t" style="left:360px;top:455.92px;font-family:'Liberation Serif', serif;font-size:13px;font-weight:700;font-style:normal;color:#000000;transform:scaleX(0.9538);transform-origin:0 0;">RUC:</div><div class="a t" style="left:409px;top:455.92px;font-family:'Liberation Serif', serif;font-size:13px;font-weight:400;font-style:italic;color:#000000;transform:scaleX(1.0651);transform-origin:0 0;">1721660700001</div><div class="a t" style="left:361px;top:472.12px;font-family:'Liberation Serif', serif;font-size:13px;font-weight:700;font-style:normal;color:#000000;transform:scaleX(0.9925);transform-origin:0 0;">TELÉFONO:</div><div class="a t" style="left:446px;top:472.12px;font-family:'Liberation Serif', serif;font-size:13px;font-weight:400;font-style:italic;color:#000000;transform:scaleX(1.1077);transform-origin:0 0;">0968412442</div><div class="a t" style="left:360px;top:486.62px;font-family:'Liberation Serif', serif;font-size:13px;font-weight:700;font-style:normal;color:#000000;transform:scaleX(0.9979);transform-origin:0 0;">DIRECCIÓN:</div><div class="a t" style="left:449px;top:487.06px;font-family:'Liberation Serif', serif;font-size:12.5px;font-weight:400;font-style:normal;color:#000000;letter-spacing:2.028px;">VALLE HERMOSO/ CALLE</div><div class="a t" style="left:361px;top:502.11px;font-family:'Liberation Serif', serif;font-size:12px;font-weight:400;font-style:normal;color:#000000;transform:scaleX(0.9728);transform-origin:0 0;">PINCHINCHA</div><div class="a t" style="left:361px;top:515.42px;font-family:'Liberation Serif', serif;font-size:13px;font-weight:700;font-style:normal;color:#000000;transform:scaleX(0.9773);transform-origin:0 0;">CORREO:</div><div class="a t" style="left:715px;top:441.31px;font-family:'Liberation Serif', serif;font-size:12px;font-weight:400;font-style:normal;color:#000000;transform:scaleX(1.1140);transform-origin:0 0;">PROFORMA Nro.:</div><div class="a t" style="left:822px;top:441.31px;font-family:'Liberation Serif', serif;font-size:12px;font-weight:400;font-style:italic;color:#000000;">4</div><div class="a t" style="left:715px;top:455.61px;font-family:'Liberation Serif', serif;font-size:12px;font-weight:700;font-style:normal;color:#000000;transform:scaleX(1.0087);transform-origin:0 0;">FECHA:</div><div class="a t" style="left:764.8px;top:455.61px;font-family:'Liberation Serif', serif;font-size:12px;font-weight:400;font-style:normal;color:#000000;transform:scaleX(1.2219);transform-origin:0 0;">30 de agosto del 2023</div><div class="a t" style="left:715px;top:471.01px;font-family:'Liberation Serif', serif;font-size:12px;font-weight:400;font-style:normal;color:#000000;transform:scaleX(1.0400);transform-origin:0 0;">CONTACTO:</div><div class="a t" style="left:790.5px;top:471.01px;font-family:'Liberation Serif', serif;font-size:12px;font-weight:400;font-style:italic;color:#000000;transform:scaleX(1.2083);transform-origin:0 0;">0968412442</div><div class="a t" style="left:715px;top:485.51px;font-family:'Liberation Serif', serif;font-size:12px;font-weight:400;font-style:normal;color:#000000;transform:scaleX(1.0273);transform-origin:0 0;">VIGENCIA:</div><div class="a t" style="left:782px;top:485.51px;font-family:'Liberation Serif', serif;font-size:12px;font-weight:400;font-style:italic;color:#000000;transform:scaleX(1.1463);transform-origin:0 0;">30 DÍAS</div><div class="a t" style="left:362px;top:533.86px;font-family:'Liberation Serif', serif;font-size:12.5px;font-weight:700;font-style:normal;color:#000000;">I</div><div class="a t" style="left:361.5px;top:549.36px;font-family:'Liberation Serif', serif;font-size:12.5px;font-weight:700;font-style:normal;color:#000000;">T</div><div class="a t" style="left:362px;top:564.86px;font-family:'Liberation Serif', serif;font-size:12.5px;font-weight:700;font-style:normal;color:#000000;">E</div><div class="a t" style="left:361px;top:579.42px;font-family:'Liberation Serif', serif;font-size:13px;font-weight:700;font-style:normal;color:#000000;">M</div><div class="a t" style="left:404px;top:556.86px;font-family:'Liberation Serif', serif;font-size:12.5px;font-weight:700;font-style:normal;color:#000000;transform:scaleX(0.9726);transform-origin:0 0;">CPC</div><div class="a t" style="left:497px;top:556.86px;font-family:'Liberation Serif', serif;font-size:12.5px;font-weight:700;font-style:normal;color:#000000;transform:scaleX(1.0798);transform-origin:0 0;">DESCRIPCIÓN</div><div class="a t" style="left:654px;top:540.86px;font-family:'Liberation Serif', serif;font-size:12.5px;font-weight:700;font-style:normal;color:#000000;transform:scaleX(0.9900);transform-origin:0 0;">UNIDAD</div><div class="a t" style="left:669px;top:556.86px;font-family:'Liberation Serif', serif;font-size:12.5px;font-weight:700;font-style:normal;color:#000000;transform:scaleX(1.0360);transform-origin:0 0;">DE</div><div class="a t" style="left:653px;top:571.86px;font-family:'Liberation Serif', serif;font-size:12.5px;font-weight:700;font-style:normal;color:#000000;transform:scaleX(0.9560);transform-origin:0 0;">MEDIDA</div><div class="a t" style="left:726.6px;top:556.86px;font-family:'Liberation Serif', serif;font-size:12.5px;font-weight:700;font-style:normal;color:#000000;transform:scaleX(0.9707);transform-origin:0 0;">CANTIDAD</div><div class="a t" style="left:821px;top:556.86px;font-family:'Liberation Serif', serif;font-size:12.5px;font-weight:700;font-style:normal;color:#000000;transform:scaleX(1.1154);transform-origin:0 0;">V.UNITARIO</div><div class="a t" style="left:951px;top:556.86px;font-family:'Liberation Serif', serif;font-size:12.5px;font-weight:700;font-style:normal;color:#000000;transform:scaleX(1.0798);transform-origin:0 0;">V.TOTAL</div><div class="a t" style="left:354px;top:596.31px;font-family:'Liberation Serif', serif;font-size:12px;font-weight:400;font-style:normal;color:#000000;">1</div><div class="a t" style="left:381px;top:596.31px;font-family:'Liberation Serif', serif;font-size:12px;font-weight:400;font-style:normal;color:#000000;transform:scaleX(1.1674);transform-origin:0 0;">361140311</div><div class="a t" style="left:451px;top:596.31px;font-family:'Liberation Serif', serif;font-size:12px;font-weight:400;font-style:normal;color:#000000;transform:scaleX(1.0183);transform-origin:0 0;">LLANTA  INFINITY  700R16 LT</div><div class="a t" style="left:640px;top:596.31px;font-family:'Liberation Serif', serif;font-size:12px;font-weight:400;font-style:normal;color:#000000;transform:scaleX(0.9086);transform-origin:0 0;">UNIDAD</div><div class="a t" style="left:716px;top:596.31px;font-family:'Liberation Serif', serif;font-size:12px;font-weight:400;font-style:normal;color:#000000;">2</div><div class="a t" style="left:809px;top:596.31px;font-family:'Liberation Serif', serif;font-size:12px;font-weight:400;font-style:normal;color:#000000;transform:scaleX(1.1667);transform-origin:0 0;">$ 203,12</div><div class="a t" style="left:913.5px;top:596.31px;font-family:'Liberation Serif', serif;font-size:12px;font-weight:400;font-style:normal;color:#000000;transform:scaleX(1.1429);transform-origin:0 0;">$ 406,24</div><div class="a t" style="left:354px;top:623.31px;font-family:'Liberation Serif', serif;font-size:12px;font-weight:400;font-style:normal;color:#000000;">2</div><div class="a t" style="left:381px;top:623.31px;font-family:'Liberation Serif', serif;font-size:12px;font-weight:400;font-style:normal;color:#000000;transform:scaleX(1.1674);transform-origin:0 0;">361140311</div><div class="a t" style="left:451px;top:623.31px;font-family:'Liberation Serif', serif;font-size:12px;font-weight:400;font-style:normal;color:#000000;transform:scaleX(1.0293);transform-origin:0 0;">SERVICIO  SEM PES 16 17 17.5</div><div class="a t" style="left:640px;top:623.31px;font-family:'Liberation Serif', serif;font-size:12px;font-weight:400;font-style:normal;color:#000000;transform:scaleX(0.9086);transform-origin:0 0;">UNIDAD</div><div class="a t" style="left:716px;top:623.31px;font-family:'Liberation Serif', serif;font-size:12px;font-weight:400;font-style:normal;color:#000000;">1</div><div class="a t" style="left:809px;top:623.31px;font-family:'Liberation Serif', serif;font-size:12px;font-weight:400;font-style:normal;color:#000000;transform:scaleX(1.1667);transform-origin:0 0;">$   35,71</div><div class="a t" style="left:913.5px;top:623.31px;font-family:'Liberation Serif', serif;font-size:12px;font-weight:400;font-style:normal;color:#000000;transform:scaleX(1.1429);transform-origin:0 0;">$   35,71</div><div class="a t" style="left:833.6px;top:656.86px;font-family:'Liberation Serif', serif;font-size:12.5px;font-weight:700;font-style:normal;color:#000000;transform:scaleX(1.0936);transform-origin:0 0;">SUBTOTAL</div><div class="a t" style="left:926px;top:649.97px;font-family:'Liberation Serif', serif;font-size:13.5px;font-weight:700;font-style:normal;color:#000000;transform:scaleX(1.2360);transform-origin:0 0;">$ 441,96</div><div class="a t" style="left:850px;top:682.86px;font-family:'Liberation Serif', serif;font-size:12.5px;font-weight:700;font-style:normal;color:#000000;transform:scaleX(1.0988);transform-origin:0 0;">IVA  12%</div><div class="a t" style="left:925px;top:676.97px;font-family:'Liberation Serif', serif;font-size:13.5px;font-weight:700;font-style:normal;color:#000000;transform:scaleX(1.2698);transform-origin:0 0;">$   53,04</div><div class="a t" style="left:182.5px;top:110.59px;font-family:'Liberation Sans', sans-serif;font-size:11.5px;font-weight:700;font-style:normal;color:#444;">N</div><div class="a t" style="left:206px;top:110.59px;font-family:'Liberation Sans', sans-serif;font-size:11.5px;font-weight:700;font-style:italic;color:#444;">K</div><div class="a t" style="left:231px;top:110.59px;font-family:'Liberation Sans', sans-serif;font-size:11.5px;font-weight:700;font-style:normal;color:#444;">S</div><div class="a t" style="left:266px;top:111.05px;font-family:'Liberation Sans', sans-serif;font-size:11px;font-weight:400;font-style:normal;color:#555;letter-spacing:-0.875px;">abc</div><div class="a t" style="left:292.5px;top:110.14px;font-family:'Liberation Sans', sans-serif;font-size:12px;font-weight:700;font-style:normal;color:#444;">x</div><div class="a t" style="left:300px;top:118.12px;font-family:'Liberation Sans', sans-serif;font-size:6.5px;font-weight:400;font-style:normal;color:#2E6DB4;">2</div><div class="a t" style="left:316px;top:110.14px;font-family:'Liberation Sans', sans-serif;font-size:12px;font-weight:700;font-style:normal;color:#444;">x</div><div class="a t" style="left:324px;top:109.12px;font-family:'Liberation Sans', sans-serif;font-size:6.5px;font-weight:400;font-style:normal;color:#2E6DB4;">2</div><div class="a t" style="left:340px;top:79.33px;font-family:'Liberation Sans', sans-serif;font-size:14px;font-weight:400;font-style:normal;color:#555;">A</div><div class="a t" style="left:365px;top:83.05px;font-family:'Liberation Sans', sans-serif;font-size:11px;font-weight:400;font-style:normal;color:#555;">A</div><div class="a t" style="left:392px;top:79.23px;font-family:'Liberation Sans', sans-serif;font-size:13px;font-weight:400;font-style:normal;color:#555;letter-spacing:-0.906px;">Aa</div><div class="a t" style="left:439px;top:78.95px;font-family:'Liberation Sans', sans-serif;font-size:10px;font-weight:400;font-style:normal;color:#555;">A</div><div class="a t" style="left:346px;top:109.97px;font-family:'Liberation Sans', sans-serif;font-size:15.5px;font-weight:700;font-style:normal;color:#FFFFFF;-webkit-text-stroke:1.2px #2E6DB4;text-shadow:0 0 2px #9CC3EC;">A</div><div class="a t" style="left:383px;top:109.95px;font-family:'Liberation Sans', sans-serif;font-size:10px;font-weight:700;font-style:normal;color:#555;letter-spacing:-2.672px;">ab</div><div class="a t" style="left:424px;top:108.23px;font-family:'Liberation Sans', sans-serif;font-size:13px;font-weight:400;font-style:normal;color:#555;">A</div><div class="a t" style="left:514px;top:76.57px;font-family:'Liberation Sans', sans-serif;font-size:6px;font-weight:400;font-style:normal;color:#2E6DB4;">1</div><div class="a t" style="left:514px;top:82.57px;font-family:'Liberation Sans', sans-serif;font-size:6px;font-weight:400;font-style:normal;color:#2E6DB4;">2</div><div class="a t" style="left:514px;top:88.57px;font-family:'Liberation Sans', sans-serif;font-size:6px;font-weight:400;font-style:normal;color:#2E6DB4;">3</div><div class="a t" style="left:553px;top:76.57px;font-family:'Liberation Sans', sans-serif;font-size:6px;font-weight:400;font-style:normal;color:#2E6DB4;">1</div><div class="a t" style="left:557px;top:82.57px;font-family:'Liberation Sans', sans-serif;font-size:6px;font-weight:400;font-style:normal;color:#2E6DB4;">a</div><div class="a t" style="left:559px;top:88.57px;font-family:'Liberation Sans', sans-serif;font-size:6px;font-weight:400;font-style:normal;color:#2E6DB4;">i</div><div class="a t" style="left:655px;top:76.31px;font-family:'Liberation Sans', sans-serif;font-size:8.5px;font-weight:700;font-style:normal;color:#2E6DB4;">A</div><div class="a t" style="left:655px;top:85.31px;font-family:'Liberation Sans', sans-serif;font-size:8.5px;font-weight:700;font-style:normal;color:#8E44AD;">Z</div><div class="a t" style="left:687px;top:77.42px;font-family:'Liberation Sans', sans-serif;font-size:15px;font-weight:400;font-style:normal;color:#555;">¶</div><div class="a t" style="left:1119px;top:92.95px;font-family:'Liberation Sans', sans-serif;font-size:10px;font-weight:700;font-style:normal;color:#555;">ab</div><div class="a t" style="left:1125px;top:99.95px;font-family:'Liberation Sans', sans-serif;font-size:10px;font-weight:700;font-style:normal;color:#2E6DB4;">ac</div><div class="a t" style="left:1261px;top:731.14px;font-family:'Liberation Sans', sans-serif;font-size:12px;font-weight:400;font-style:normal;color:#FFFFFF;letter-spacing:-0.785px;">11:32</div>
</body></html>
